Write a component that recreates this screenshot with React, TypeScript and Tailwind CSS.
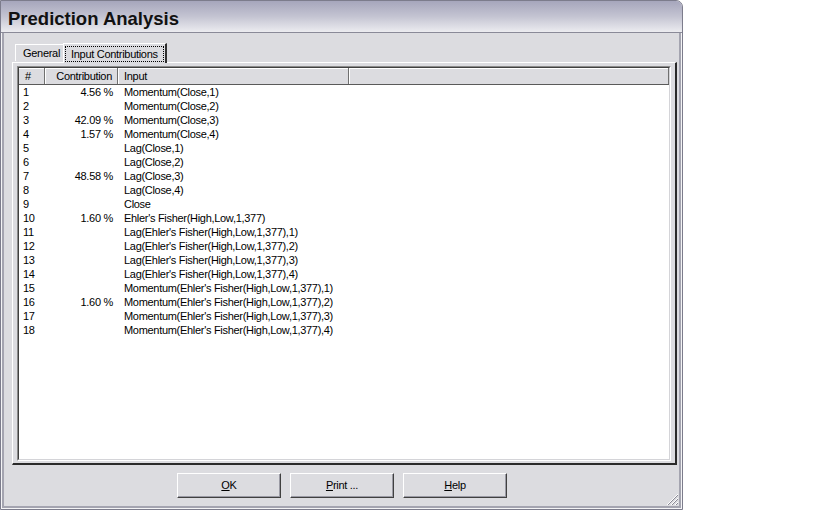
import React from "react";

const rows: [string, string, string][] = [
  ["1", "4.56 %", "Momentum(Close,1)"],
  ["2", "", "Momentum(Close,2)"],
  ["3", "42.09 %", "Momentum(Close,3)"],
  ["4", "1.57 %", "Momentum(Close,4)"],
  ["5", "", "Lag(Close,1)"],
  ["6", "", "Lag(Close,2)"],
  ["7", "48.58 %", "Lag(Close,3)"],
  ["8", "", "Lag(Close,4)"],
  ["9", "", "Close"],
  ["10", "1.60 %", "Ehler's Fisher(High,Low,1,377)"],
  ["11", "", "Lag(Ehler's Fisher(High,Low,1,377),1)"],
  ["12", "", "Lag(Ehler's Fisher(High,Low,1,377),2)"],
  ["13", "", "Lag(Ehler's Fisher(High,Low,1,377),3)"],
  ["14", "", "Lag(Ehler's Fisher(High,Low,1,377),4)"],
  ["15", "", "Momentum(Ehler's Fisher(High,Low,1,377),1)"],
  ["16", "1.60 %", "Momentum(Ehler's Fisher(High,Low,1,377),2)"],
  ["17", "", "Momentum(Ehler's Fisher(High,Low,1,377),3)"],
  ["18", "", "Momentum(Ehler's Fisher(High,Low,1,377),4)"],
];

function Btn({ u, rest }: { u: string; rest: string }) {
  return (
    <div className="w-[104px] h-[25px] border border-t-white border-l-white border-r-[#404040] border-b-[#404040] shadow-[inset_-1px_-1px_0_#9a9aa4] bg-[#dcdce0] flex items-center justify-center text-[11px] tracking-[-0.3px] text-black">
      <span>
        <span className="underline">{u}</span>
        {rest}
      </span>
    </div>
  );
}

function HeadCell({ w, children, right }: { w: string; children?: React.ReactNode; right?: boolean }) {
  return (
    <div
      className={`${w} h-full flex items-center border-r border-r-[#707070] shadow-[inset_1px_0_0_#ffffff] ${right ? "justify-end pr-[5px]" : "pl-[6px]"}`}
    >
      {children}
    </div>
  );
}

export default function App() {
  return (
    <div
      className="w-[840px] h-[525px] bg-white relative overflow-hidden"
      style={{ fontFamily: '"Liberation Sans", Arial, sans-serif' }}
    >
      <div className="w-[683px] h-[510px] flex flex-col border border-[#7c7c8c] rounded-tr-[7px] overflow-hidden bg-[#dcdce0] shadow-[inset_0_0_0_1px_#f4f4f6,inset_0_0_0_3px_#a4a4b0]">
        {/* Title bar */}
        <div className="h-[32px] shrink-0 bg-gradient-to-b from-[#a6a6bc] via-[#c4c4d2] to-[#ececf0] border-b border-b-[#8a8a98] flex items-center pl-[7px]">
          <span className="text-[18.5px] font-bold text-[#111] pt-[4px]">Prediction Analysis</span>
        </div>

        {/* Body */}
        <div className="flex-1 flex flex-col px-[11px] pt-[9px] relative">
          {/* Tabs */}
          <div className="flex items-end h-[20px] pl-[3px] text-[11px] tracking-[-0.3px] text-black relative z-10">
            <div className="h-[17px] pl-[7px] pr-[3px] flex items-center border-t border-l border-t-white border-l-white mb-[1px]">
              General
            </div>
            <div className="h-[20px] px-[1px] flex items-center bg-[#dcdce0] border-t border-l border-t-white border-l-white border-r-2 border-r-[#303030] -mb-[1px]">
              <span className="border border-dotted border-black px-[5px] leading-[14px]">Input Contributions</span>
            </div>
          </div>

          {/* Panel */}
          <div className="w-[665px] h-[403px] border-t border-l border-t-white border-l-white border-r-2 border-b-2 border-r-[#2a2a2a] border-b-[#2a2a2a] px-[4px] pt-[3px] flex">
            <div className="flex-1 h-[395px] border border-t-[#8a8a8a] border-l-[#8a8a8a] border-r-white border-b-white flex">
              <div className="flex-1 border border-t-[#404040] border-l-[#404040] border-r-[#d4d4d8] border-b-[#d4d4d8] bg-white flex flex-col">
                {/* header */}
                <div className="h-[17px] shrink-0 flex bg-[#dcdce0] border-b border-b-[#5a5a5a] shadow-[inset_0_1px_0_#ffffff] text-[11px] tracking-[-0.3px] text-black">
                  <div className="w-[26px] h-full flex items-center pl-[6px] border-r border-r-[#707070]">#</div>
                  <HeadCell w="w-[73px]" right>Contribution</HeadCell>
                  <HeadCell w="w-[231px]">Input</HeadCell>
                  <div className="w-[320px] h-full border-r border-r-[#707070] shadow-[inset_1px_0_0_#ffffff]" />
                </div>
                {/* rows */}
                <div className="text-[11px] tracking-[-0.3px] text-black">
                  {rows.map(([n, c, i]) => (
                    <div key={n} className="h-[14px] flex items-center leading-[14px]">
                      <div className="w-[26px] pl-[4px]">{n}</div>
                      <div className="w-[73px] text-right pr-[5px] whitespace-pre">{c ? c : " "}</div>
                      <div className="pl-[6px] whitespace-nowrap">{i}</div>
                    </div>
                  ))}
                </div>
              </div>
            </div>
          </div>

          {/* Buttons */}
          <div className="flex gap-[9px] pl-[165px] pt-[8px]">
            <Btn u="O" rest="K" />
            <Btn u="P" rest="rint ..." />
            <Btn u="H" rest="elp" />
          </div>

          {/* resize grip */}
          <svg className="absolute right-[3px] bottom-[3px]" width="13" height="13" viewBox="0 0 13 13">
            <g strokeWidth="1">
              <line x1="12" y1="1" x2="1" y2="12" stroke="#ffffff" />
              <line x1="12" y1="2" x2="2" y2="12" stroke="#8a8a96" />
              <line x1="12" y1="5" x2="5" y2="12" stroke="#ffffff" />
              <line x1="12" y1="6" x2="6" y2="12" stroke="#8a8a96" />
              <line x1="12" y1="9" x2="9" y2="12" stroke="#ffffff" />
              <line x1="12" y1="10" x2="10" y2="12" stroke="#8a8a96" />
            </g>
          </svg>
        </div>
      </div>
    </div>
  );
}
